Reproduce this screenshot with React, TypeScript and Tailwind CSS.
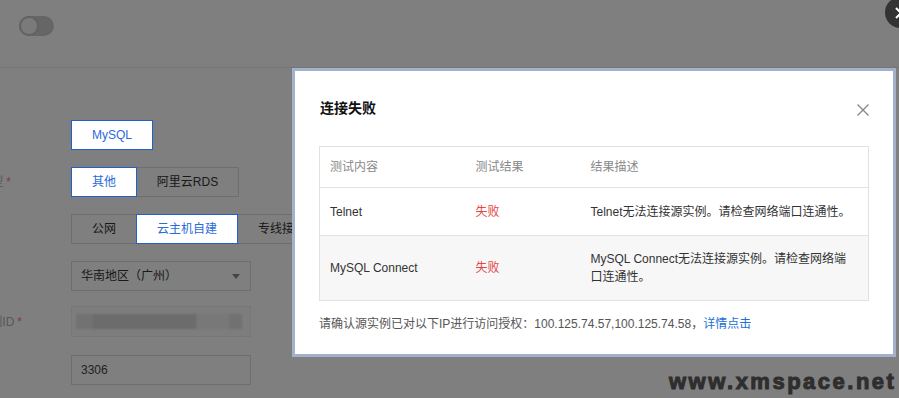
import React from "react";

const FONT = "font-[family-name:'Liberation_Sans','Noto_Sans_CJK_SC',sans-serif]";

interface SegOption {
  label: string;
  active?: boolean;
  className: string;
}

const Segmented: React.FC<{ options: SegOption[] }> = ({ options }) => (
  <div className="flex h-[30px]">
    {options.map((o, i) => (
      <button
        key={o.label}
        className={`${o.className} h-full shrink-0 whitespace-nowrap border bg-white text-[12px]
          ${i > 0 ? "-ml-px" : ""}
          ${o.active ? "relative z-10 border-[#1f5fd1] text-[#2a6ad8]" : "border-[#dddddd] text-[#333333]"}`}
      >
        {o.label}
      </button>
    ))}
  </div>
);

const FormRow: React.FC<{
  label?: string;
  labelWidth?: string;
  gap?: string;
  className: string;
  children: React.ReactNode;
}> = ({ label, labelWidth = "w-[11px]", gap = "ml-[60px]", className, children }) => (
  <div className={`flex items-center ${className}`}>
    <div className={`flex ${labelWidth} shrink-0 justify-end whitespace-nowrap text-[12px] text-[#b0b0b0]`}>
      {label && (
        <>
          {label}
          <span className="ml-[3px] text-[#f08080]">*</span>
        </>
      )}
    </div>
    <div className={`${gap} h-full`}>{children}</div>
  </div>
);

export default function App() {
  return (
    <div className={`relative h-[398px] w-full overflow-hidden bg-white ${FONT}`}>
      {/* page under the mask */}
      <div className="flex h-[68px] items-start border-b border-[#ebebeb] px-[19px] pt-[16px]">
        <div className="flex h-[20px] w-[35px] items-center rounded-full bg-[#cccccc]">
          <div className="h-[20px] w-[20px] rounded-full border-2 border-[#c4c4c4] bg-[#f4f4f4]" />
        </div>
      </div>

      <div className="flex flex-col pt-[52px]">
        <FormRow className="h-[30px]">
          <Segmented options={[{ label: "MySQL", active: true, className: "w-[82px]" }]} />
        </FormRow>

        <FormRow label="实例类型" className="mt-[17px] h-[30px]">
          <Segmented
            options={[
              { label: "其他", active: true, className: "w-[66px]" },
              { label: "阿里云RDS", className: "w-[103px]" },
            ]}
          />
        </FormRow>

        <FormRow className="mt-[17px] h-[30px]">
          <Segmented
            options={[
              { label: "公网", className: "w-[66px]" },
              { label: "云主机自建", active: true, className: "w-[102px]" },
              { label: "专线接入", className: "w-[90px]" },
            ]}
          />
        </FormRow>

        <FormRow className="mt-[17px] h-[30px]">
          <div className="flex h-full w-[180px] items-center justify-between border border-[#dddddd] pl-[9px] pr-[10px] text-[12px] text-[#333333]">
            <span>华南地区（广州）</span>
            <svg width="8" height="5" viewBox="0 0 8 5">
              <path d="M0 0h8L4 5z" fill="#888888" />
            </svg>
          </div>
        </FormRow>

        <FormRow label="实例ID" labelWidth="w-[22px]" gap="ml-[49px]" className="mt-[15px] h-[31px]">
          <div className="flex h-full w-[180px] items-center border border-[#eeeeee] bg-[#fafafa] pl-[4px]">
            <div className="h-[15px] w-[16px] bg-[#e4e4e4] blur-[1px]" />
            <div className="h-[15px] w-[105px] bg-[#d8d8d8] blur-[1px]" />
            <div className="h-[15px] w-[32px] bg-[#f0f0f0] blur-[1px]" />
            <div className="h-[15px] w-[13px] bg-[#e2e2e2] blur-[1px]" />
          </div>
        </FormRow>

        <FormRow className="mt-[18px] h-[30px]">
          <div className="flex h-full w-[180px] items-center border border-[#dddddd] pl-[9px] text-[12px] text-[#444444]">
            3306
          </div>
        </FormRow>
      </div>

      {/* mask */}
      <div className="absolute inset-0 bg-black/50" />

      {/* viewer close button, cut by the frame */}
      <div className="absolute left-[885px] top-[-3px] flex h-[31px] w-[31px] items-center justify-center rounded-full bg-[#333333]">
        <svg width="12" height="12" viewBox="0 0 12 12">
          <path d="M1 1l10 10M11 1L1 11" stroke="#ffffff" strokeWidth="2" />
        </svg>
      </div>

      {/* dialog */}
      <div className="absolute left-[292px] top-[68px] h-[289px] w-[604px] border-[3px] border-[#a4b1cc] bg-white px-[24px] pt-[27px]">
        <button className="absolute left-[562px] top-[33px] h-[12px] w-[12px]">
          <svg width="12" height="12" viewBox="0 0 12 12">
            <path d="M0.5 0.5l11 11M11.5 0.5l-11 11" stroke="#888888" strokeWidth="1.4" />
          </svg>
        </button>

        <h3 className="pl-px text-[14px] font-semibold leading-[20px] text-[#111111]">连接失败</h3>

        <table className="mt-[28px] w-full table-fixed border-collapse border border-[#e2e2e2] text-[12px]">
          <colgroup>
            <col className="w-[146px]" />
            <col className="w-[115px]" />
            <col />
          </colgroup>
          <thead>
            <tr className="h-[41px]">
              <th className="pl-[10px] text-left font-normal text-[#888888]">测试内容</th>
              <th className="pl-[10px] text-left font-normal text-[#888888]">测试结果</th>
              <th className="pl-[10px] text-left font-normal text-[#888888]">结果描述</th>
            </tr>
          </thead>
          <tbody className="text-[#333333]">
            <tr className="h-[48px] border-t border-[#e2e2e2]">
              <td className="pl-[10px]">Telnet</td>
              <td className="pl-[10px] text-[#e54545]">失败</td>
              <td className="pl-[10px] pr-[16px] leading-[18px]">Telnet无法连接源实例。请检查网络端口连通性。</td>
            </tr>
            <tr className="h-[65px] border-t border-[#e2e2e2] bg-[#f7f7f7]">
              <td className="pl-[10px]">MySQL Connect</td>
              <td className="pl-[10px] text-[#e54545]">失败</td>
              <td className="pl-[10px] pr-[16px] leading-[18px]">
                MySQL Connect无法连接源实例。请检查网络端口连通性。
              </td>
            </tr>
          </tbody>
        </table>

        <p className="mt-[14px] text-[12px] leading-[18px] text-[#555555]">
          请确认源实例已对以下IP进行访问授权：100.125.74.57,100.125.74.58，
          <a className="text-[#1a6fd6]">详情点击</a>
        </p>
      </div>

      {/* watermark */}
      <div className="absolute left-[669px] top-[371px] text-[22px] font-bold leading-[22px] tracking-[2.5px] text-[#2e2e2e] [-webkit-text-stroke:1px_#2e2e2e]">
        www.xmspace.net
      </div>
    </div>
  );
}
